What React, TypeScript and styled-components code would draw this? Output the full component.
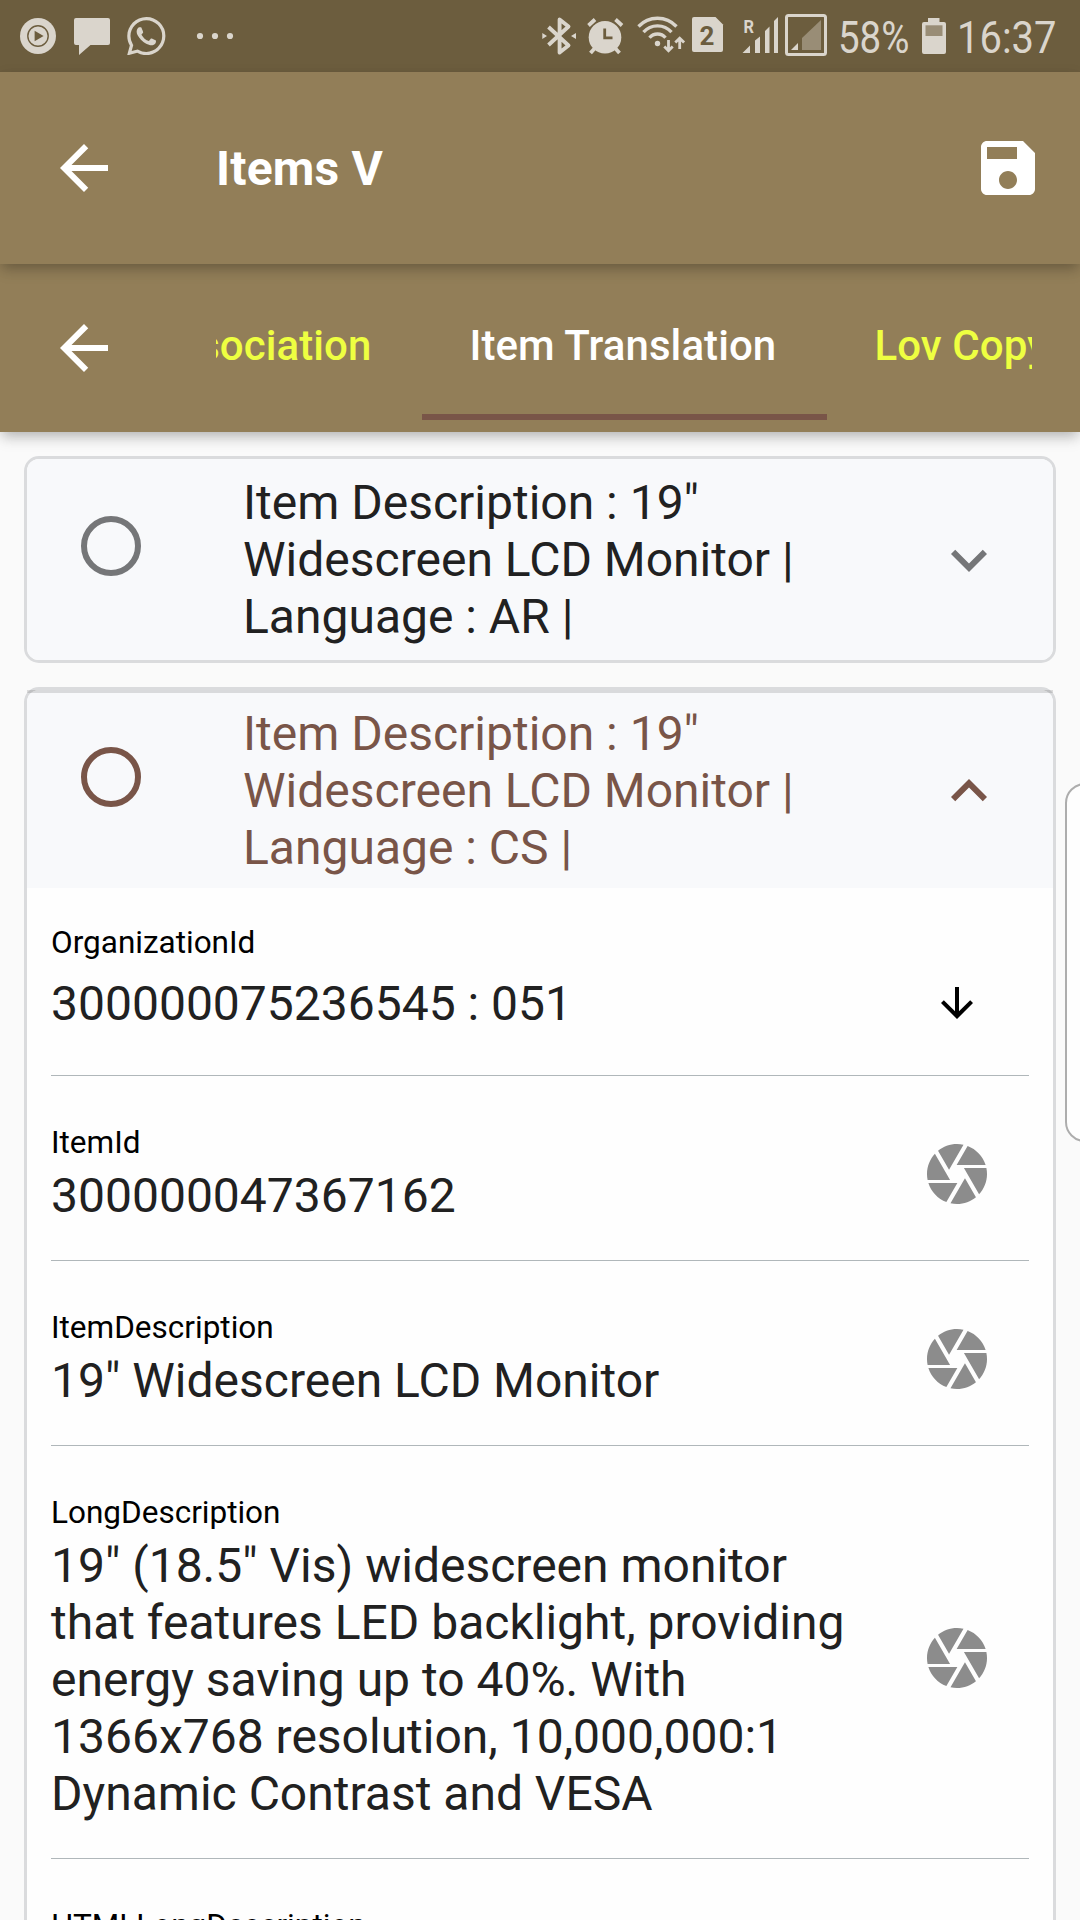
import React from "react";
import styled, { createGlobalStyle, css } from "styled-components";
import { SiWhatsapp } from "react-icons/si";

const palette = {
  statusBar: "#6c5d3e",
  statusIcon: "#dad5cc",
  statusDim: "#998d76",
  bar: "#927e58",
  tab: "#eeff41",
  accent: "#795548",
  muted: "#757678",
  text: "#212121",
  page: "#fafafa",
  header: "#f8f9fb",
  border: "#dadbdd",
};

const GlobalStyle = createGlobalStyle`
  *, *::before, *::after { box-sizing: border-box; }
  html, body { margin: 0; padding: 0; }
  body {
    background: ${palette.page};
    font-family: Roboto, "Liberation Sans", sans-serif;
    color: ${palette.text};
  }
  svg { display: block; flex: none; }
`;

const Screen = styled.div`
  position: relative;
  display: flex;
  flex-direction: column;
  width: 1080px;
  height: 1920px;
  overflow: hidden;
  background: ${palette.page};
`;

const StatusBar = styled.header`
  display: flex;
  justify-content: space-between;
  flex: none;
  height: 72px;
  background: ${palette.statusBar};
  color: ${palette.statusIcon};
`;

const StatusGroup = styled.div`
  display: flex;
  align-items: center;
  height: 72px;
`;

const StatusText = styled.span<{ $width: number; $stretch: number }>`
  width: ${(p) => p.$width}px;
  padding-top: 4px;
  font-size: 45px;
  line-height: 72px;
  white-space: nowrap;
  transform: scaleX(${(p) => p.$stretch});
  transform-origin: left center;
`;

const WhatsappSlot = styled.span`
  display: flex;
  width: 64px;
  padding-left: 9px;
`;

const barShadow = css`
  box-shadow: 0 6px 12px -3px rgba(0, 0, 0, 0.2),
    0 6px 15px 0 rgba(0, 0, 0, 0.12);
`;

const Toolbar = styled.div`
  position: relative;
  z-index: 3;
  display: flex;
  align-items: center;
  flex: none;
  height: 192px;
  padding: 0 36px 0 48px;
  background: ${palette.bar};
  color: #fff;
  ${barShadow}
`;

const Title = styled.h1`
  flex: 1;
  margin: 2px 0 0 96px;
  font-size: 48px;
  line-height: 60px;
  font-weight: 700;
  letter-spacing: 0.2px;
`;

const TabBar = styled.nav`
  position: relative;
  z-index: 2;
  display: flex;
  align-items: center;
  flex: none;
  height: 168px;
  padding-left: 48px;
  background: ${palette.bar};
  color: #fff;
  ${barShadow}
`;

const TabStrip = styled.div`
  display: flex;
  align-self: flex-end;
  width: 816px;
  height: 144px;
  margin: 0 0 12px 96px;
  overflow: hidden;
`;

const Tab = styled.div<{ $width: number; $active?: boolean; $alignEnd?: boolean }>`
  display: flex;
  flex: none;
  align-items: center;
  justify-content: ${(p) => (p.$alignEnd ? "flex-end" : "flex-start")};
  width: ${(p) => p.$width}px;
  padding: 2px ${(p) => (p.$alignEnd ? 50 : 48)}px 0 48px;
  border-bottom: 6px solid ${(p) => (p.$active ? palette.accent : "transparent")};
  color: ${(p) => (p.$active ? "#fff" : palette.tab)};
  font-size: 42px;
  font-weight: 500;
  line-height: 60px;
  letter-spacing: 0.08px;
  white-space: nowrap;
`;

const Content = styled.main`
  display: flex;
  flex-direction: column;
  gap: 24px;
  padding: 24px;
`;

const Card = styled.section`
  flex: none;
  border: 3px solid ${palette.border};
  border-radius: 15px;
  background: #fefefe;
`;

const CardHeader = styled.div<{ $open?: boolean }>`
  position: relative;
  display: flex;
  height: ${(p) => (p.$open ? 198 : 201)}px;
  padding: 15px 48px 0 54px;
  border-radius: ${(p) => (p.$open ? "12px 12px 0 0" : "12px")};
  background: ${palette.header};
  color: ${(p) => (p.$open ? palette.accent : palette.text)};

  ${(p) =>
    p.$open &&
    css`
      &::before {
        content: "";
        position: absolute;
        top: 0;
        left: 0;
        right: 0;
        height: 3px;
        background: rgba(0, 0, 0, 0.12);
      }
    `}
`;

const Radio = styled.span<{ $open?: boolean }>`
  flex: none;
  width: 60px;
  height: 60px;
  margin-top: 42px;
  border: 6px solid ${(p) => (p.$open ? palette.accent : palette.muted)};
  border-radius: 50%;
`;

const CardTitle = styled.div`
  width: 580px;
  margin-left: 102px;
  font-size: 48px;
  line-height: 57px;
`;

const Chevron = styled.span<{ $open?: boolean }>`
  margin: 50px 0 0 auto;
  color: ${(p) => (p.$open ? palette.accent : palette.muted)};
`;

const Field = styled.div<{ $select?: boolean }>`
  display: flex;
  justify-content: space-between;
  margin: 0 24px;
  padding: ${(p) => (p.$select ? "35px 0 43px" : "47px 0 36px")};
  border-bottom: 1px solid #b0b7ba;
`;

const FieldText = styled.div<{ $select?: boolean }>`
  display: flex;
  flex-direction: column;
  gap: ${(p) => (p.$select ? 12 : 4)}px;
  width: 804px;
`;

const Label = styled.span`
  height: 40px;
  font-size: 31.5px;
  line-height: 40px;
  color: #000;
`;

const Value = styled.span<{ $rows?: number }>`
  min-height: ${(p) => (p.$rows ?? 1) * 57}px;
  font-size: 48px;
  line-height: 57px;
`;

const FieldAction = styled.span<{ $select?: boolean }>`
  display: flex;
  align-items: center;
  justify-content: center;
  width: 72px;
  margin-right: 36px;
  padding-top: ${(p) => (p.$select ? 50 : 0)}px;
  color: ${(p) => (p.$select ? "#000" : "#8c8c8c")};
`;

const EdgeHandle = styled.div`
  position: absolute;
  top: 783px;
  right: -30px;
  width: 45px;
  height: 359px;
  border: 2px solid #adadad;
  border-radius: 20px;
  background: #fefefe;
`;

type GlyphProps = { x: number; w: number; children: React.ReactNode };
const StatusGlyph = ({ x, w, children }: GlyphProps) => (
  <svg width={w} height={72} viewBox={`${x} 0 ${w} 72`} fill="currentColor">
    {children}
  </svg>
);

const MaterialIcon = ({ d, size = 72 }: { d: string; size?: number }) => (
  <svg width={size} height={size} viewBox="0 0 24 24" fill="currentColor">
    <path d={d} />
  </svg>
);

const icons = {
  back: "M20 11H7.83l5.59-5.59L12 4l-8 8 8 8 1.41-1.41L7.83 13H20v-2z",
  save: "M17 3H5c-1.11 0-2 .9-2 2v14c0 1.1.89 2 2 2h14c1.1 0 2-.9 2-2V7l-4-4zm-5 16c-1.66 0-3-1.34-3-3s1.34-3 3-3 3 1.34 3 3-1.34 3-3 3zm3-10H5V5h10v4z",
  down: "M20 12l-1.41-1.41L13 16.17V4h-2v12.17l-5.58-5.59L4 12l8 8 8-8z",
  more: "M16.59 8.59L12 13.17 7.41 8.59 6 10l6 6 6-6z",
  less: "M12 8l-6 6 1.41 1.41L12 10.83l4.59 4.58L18 14z",
  camera:
    "M9.4 10.5l4.77-8.26C13.47 2.09 12.75 2 12 2c-2.4 0-4.6.85-6.32 2.25l3.66 6.35.06-.1zM21.54 9c-.92-2.92-3.15-5.26-6-6.34L11.88 9h9.66zm.26 1h-7.49l.29.5 4.76 8.25C21 16.97 22 14.61 22 12c0-.69-.07-1.35-.2-2zM8.54 12l-3.9-6.75C3.01 7.03 2 9.39 2 12c0 .69.07 1.35.2 2h7.49l-1.15-2zm-6.08 3c.92 2.92 3.15 5.26 6 6.34L12.12 15H2.46zm11.27 0l-3.9 6.76c.7.15 1.42.24 2.17.24 2.4 0 4.6-.85 6.32-2.25l-3.66-6.35-.93 1.6z",
};

const StatusLeft = () => (
  <StatusGroup>
    <StatusGlyph x={0} w={64}>
      <circle cx="38" cy="36" r="18" />
      <circle cx="38" cy="36" r="10.2" fill="none" stroke={palette.statusBar} strokeWidth="1.4" />
      <path d="M34.6 30.8v10.4l9-5.2z" fill={palette.statusBar} />
    </StatusGlyph>
    <StatusGlyph x={64} w={54}>
      <path d="M76 18h32a2 2 0 0 1 2 2v23a2 2 0 0 1-2 2H90.500L79 55V45h-3a2 2 0 0 1-2-2V20a2 2 0 0 1 2-2z" />
    </StatusGlyph>
    <WhatsappSlot>
      <SiWhatsapp size={38.5} />
    </WhatsappSlot>
    <StatusGlyph x={182} w={60}>
      <circle cx="200" cy="36" r="3.1" />
      <circle cx="215" cy="36" r="3.1" />
      <circle cx="230" cy="36" r="3.1" />
    </StatusGlyph>
  </StatusGroup>
);

const StatusRight = () => (
  <StatusGroup>
    <StatusGlyph x={536} w={46}>
      <path
        d="M548.5 27L568.500 45.500L559.600 52.500V19.500L568.500 26.500L548.500 45"
        fill="none"
        stroke="currentColor"
        strokeWidth="3.9"
        strokeLinejoin="round"
      />
      <path d="M542.300 33v6l4.700-3zM576 33v6l-5-3z" />
    </StatusGlyph>
    <StatusGlyph x={582} w={48}>
      <circle cx="605" cy="37.300" r="16.300" />
      <path
        d="M588.500 25.500l6.500-6M615.500 19.500l6.500 6M595 48l-4.500 5M615 48l4.500 5"
        fill="none"
        stroke="currentColor"
        strokeWidth="3.800"
      />
      <path d="M604.700 28.500v9.300h7.800" fill="none" stroke={palette.statusBar} strokeWidth="2.800" />
    </StatusGlyph>
    <StatusGlyph x={630} w={60}>
      <circle cx="657.500" cy="43.500" r="2.700" />
      <path
        d="M638.500 26.500a26 26 0 0 1 38 0M643.500 32.200a18.500 18.500 0 0 1 28 0M649.500 37.700a10.500 10.500 0 0 1 16 0"
        fill="none"
        stroke="currentColor"
        strokeWidth="3.300"
      />
      <path
        d="M668.500 40v10.500M664.300 46.500l4.200 4.300 4.200-4.300M679.700 49V38.500M675.300 42.500l4.400-4.300 4.400 4.300"
        fill="none"
        stroke="currentColor"
        strokeWidth="2.800"
      />
    </StatusGlyph>
    <StatusGlyph x={690} w={48}>
      <path d="M694 17h21.500l7.500 7.500V50a2 2 0 0 1-2 2h-27a2 2 0 0 1-2-2V19a2 2 0 0 1 2-2z" />
      <text x="707" y="45" textAnchor="middle" fontSize="26" fontWeight="700" fill={palette.statusBar}>
        2
      </text>
    </StatusGlyph>
    <StatusGlyph x={738} w={44}>
      <text x="743.500" y="32.500" fontSize="18" fontWeight="700" textLength="10.500" lengthAdjust="spacingAndGlyphs">
        R
      </text>
      <path d="M742.500 53l7.500-7.500V53zM755 53V40.500l5-4V53zM765 53V31l4.500-4.500V53zM774 53V21l4-4v36z" />
    </StatusGlyph>
    <StatusGlyph x={782} w={56}>
      <rect x="786.500" y="15.500" width="39" height="39" rx="2" fill="none" stroke="currentColor" strokeWidth="3" />
      <path d="M791 50l7-7v7z" />
      <path d="M802 50V38l19-18v30z" fill={palette.statusDim} />
    </StatusGlyph>
    <StatusText $width={80} $stretch={0.855}>58%</StatusText>
    <StatusGlyph x={918} w={39}>
      <path d="M928 18h11.500v4H944a2 2 0 0 1 2 2v28a2 2 0 0 1-2 2h-20a2 2 0 0 1-2-2V24a2 2 0 0 1 2-2h4z" />
      <path d="M925.500 25.300h17V36h-17z" fill={palette.statusDim} />
    </StatusGlyph>
    <StatusText $width={123} $stretch={0.888}>16:37</StatusText>
  </StatusGroup>
);

const AccordionHeader = ({ language, open }: { language: string; open?: boolean }) => (
  <CardHeader $open={open}>
    <Radio $open={open} />
    <CardTitle>{`Item Description : 19" Widescreen LCD Monitor | Language : ${language} |`}</CardTitle>
    <Chevron $open={open}>
      <MaterialIcon d={open ? icons.less : icons.more} />
    </Chevron>
  </CardHeader>
);

type FieldData = { label: string; value: string; select?: boolean; rows?: number };

const fields: FieldData[] = [
  { label: "OrganizationId", value: "300000075236545 : 051", select: true },
  { label: "ItemId", value: "300000047367162" },
  { label: "ItemDescription", value: '19" Widescreen LCD Monitor' },
  {
    label: "LongDescription",
    value:
      '19" (18.5" Vis) widescreen monitor that features LED backlight, providing energy saving up to 40%. With 1366x768 resolution, 10,000,000:1 Dynamic Contrast and VESA',
  },
  { label: "HTMLLongDescription", value: "", rows: 5 },
];

export default function App() {
  return (
    <>
      <GlobalStyle />
      <Screen>
        <StatusBar>
          <StatusLeft />
          <StatusRight />
        </StatusBar>
        <Toolbar>
          <MaterialIcon d={icons.back} />
          <Title>Items V</Title>
          <MaterialIcon d={icons.save} />
        </Toolbar>
        <TabBar>
          <MaterialIcon d={icons.back} />
          <TabStrip>
            <Tab $width={205.5} $alignEnd>Association</Tab>
            <Tab $width={405} $active>Item Translation</Tab>
            <Tab $width={270}>Lov Copy</Tab>
          </TabStrip>
        </TabBar>
        <Content>
          <Card>
            <AccordionHeader language="AR" />
          </Card>
          <Card>
            <AccordionHeader language="CS" open />
            {fields.map((f) => (
              <Field key={f.label} $select={f.select}>
                <FieldText $select={f.select}>
                  <Label>{f.label}</Label>
                  <Value $rows={f.rows}>{f.value}</Value>
                </FieldText>
                <FieldAction $select={f.select}>
                  <MaterialIcon d={f.select ? icons.down : icons.camera} size={f.select ? 48 : 72} />
                </FieldAction>
              </Field>
            ))}
          </Card>
        </Content>
        <EdgeHandle />
      </Screen>
    </>
  );
}
